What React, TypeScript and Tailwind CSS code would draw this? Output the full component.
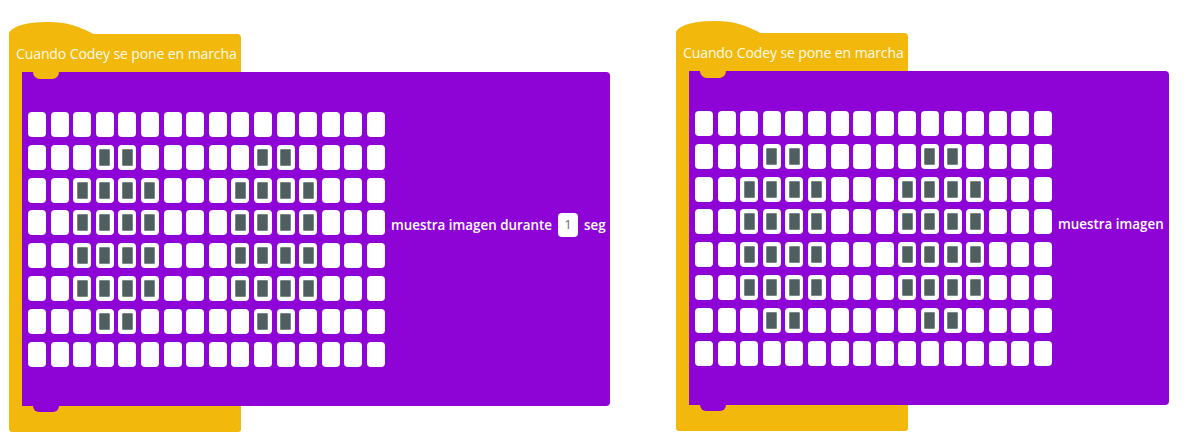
const lit: number[][] = [
  [],
  [3, 4, 10, 11],
  [2, 3, 4, 5, 9, 10, 11, 12],
  [2, 3, 4, 5, 9, 10, 11, 12],
  [2, 3, 4, 5, 9, 10, 11, 12],
  [2, 3, 4, 5, 9, 10, 11, 12],
  [3, 4, 10, 11],
  [],
]

const font = { fontFamily: '"Open Sans", "Noto Sans", sans-serif' }

function LedGrid() {
  return (
    <div className="grid grid-cols-[repeat(16,18px)] grid-rows-[repeat(8,25px)] gap-x-[4.6px] gap-y-[7.8px]">
      {lit.map((row, r) =>
        Array.from({ length: 16 }).map((_, c) => (
          <div key={`${r}-${c}`} className="bg-white rounded-[4px] flex items-center justify-center">
            {row.includes(c) && <div className="w-[11px] h-[17px] bg-[#4f5e5e] rounded-[1px] border border-[#7a8585]" />}
          </div>
        ))
      )}
    </div>
  )
}

function Block({ width, label, withDuration }: { width: number; label: string; withDuration?: boolean }) {
  return (
    <div className="flex flex-col" style={font}>
      <svg width="86" height="13" viewBox="0 0 86 13" className="block">
        <path d="M0 13 V11 C4 3 20 0 40 0 C58 0 70 4 86 13 Z" fill="#f2b80c" />
      </svg>
      <div className="w-[232px] h-[38px] bg-[#f2b80c] rounded-tr-[4px] flex items-center pl-[7px] -mt-px">
        <span className="text-[14px] text-[#fffbea] tracking-[-0.1px]">Cuando Codey se pone en marcha</span>
      </div>
      <div className="flex">
        <div className="w-[13px] bg-[#f2b80c]" />
        <div className={`relative h-[334px] bg-[#8e03d6] rounded-r-[4px] flex items-start pl-[6px] pt-[40px] ${width === 588 ? 'w-[588px]' : 'w-[480px]'}`}>
          <div className="absolute top-0 left-[11px] w-[26px] h-[7px] bg-[#f2b80c] rounded-b-[8px]" />
          <div className="absolute -bottom-[6px] left-[11px] w-[26px] h-[6px] bg-[#8e03d6] rounded-b-[8px] z-10" />
          <LedGrid />
          <div className="ml-[6px] mt-[101px] h-[24px] flex items-center gap-[6px] text-white font-semibold text-[13.4px] whitespace-nowrap">
            <span>{label}</span>
            {withDuration && (
              <>
                <span className="w-[20px] h-[24px] bg-white rounded-[4px] flex items-center justify-center text-[#6a6f80] font-normal text-[13px]">1</span>
                <span>seg</span>
              </>
            )}
          </div>
        </div>
      </div>
      <div className="w-[232px] h-[26px] bg-[#f2b80c] rounded-b-[3px]" />
    </div>
  )
}

export default function App() {
  return (
    <div className="w-[1189px] h-[447px] bg-white flex items-start pl-[9px] gap-[66px]">
      <div className="pt-[22px]">
        <Block width={588} label="muestra imagen durante" withDuration />
      </div>
      <div className="pt-[21px]">
        <Block width={480} label="muestra imagen" />
      </div>
    </div>
  )
}
